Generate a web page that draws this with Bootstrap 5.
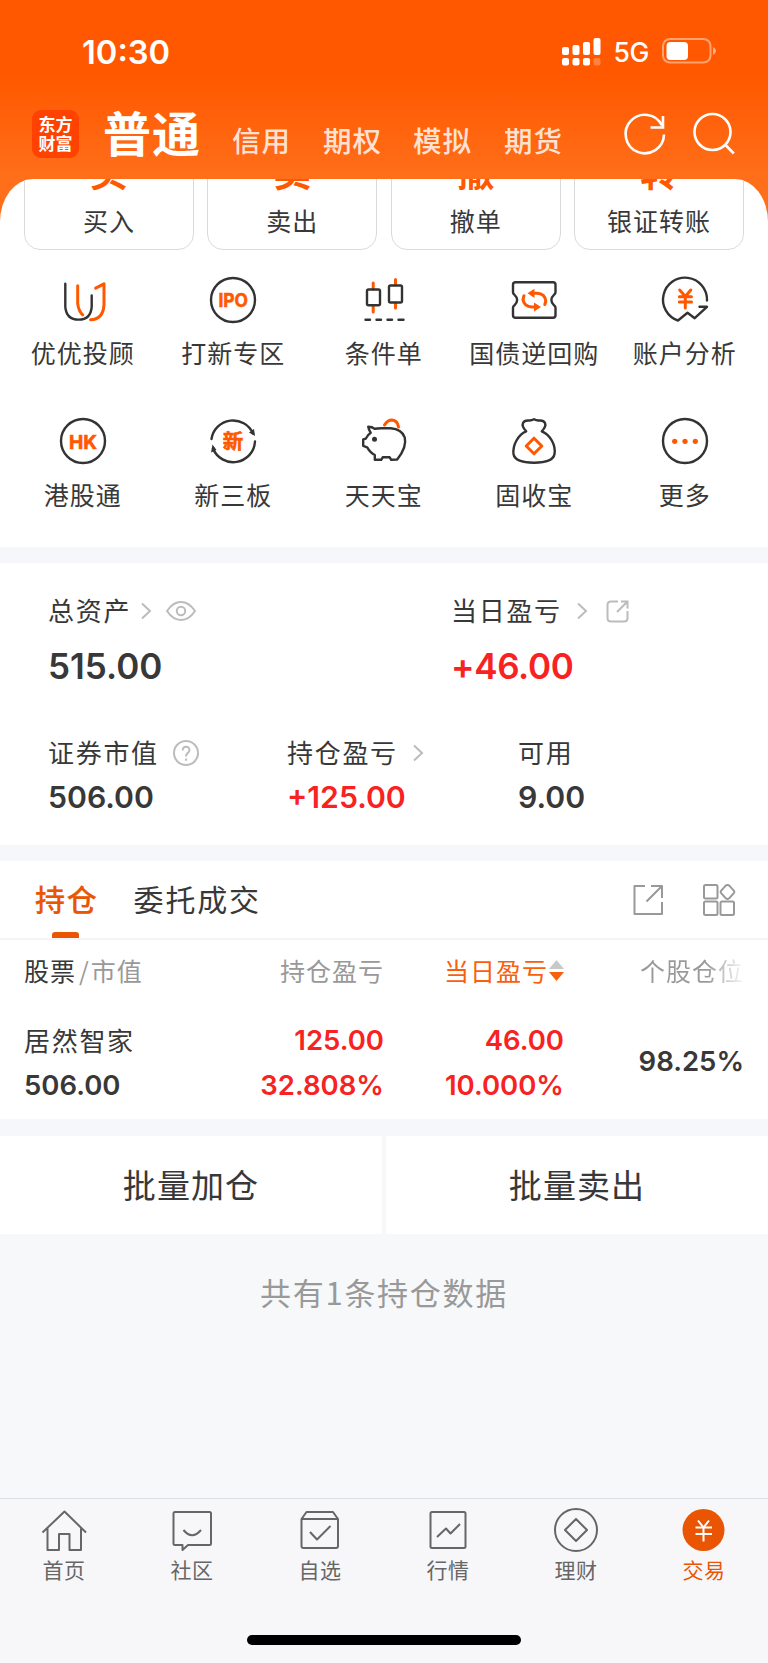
<!DOCTYPE html>
<html lang="zh-CN">
<head>
<meta charset="utf-8">
<meta name="viewport" content="width=device-width, initial-scale=1">
<title>交易</title>
<link href="https://cdn.jsdelivr.net/npm/bootstrap@5.3.0/dist/css/bootstrap.min.css" rel="stylesheet">
<style>
  body { font-family: "Noto Sans CJK SC", sans-serif; font-weight: 400; color: #383838; background: #f6f8fa; width: 768px; height: 1663px; overflow: hidden; line-height: 1; letter-spacing: 1px; }
  svg { display: block; flex: none; fill: none; overflow: visible; }
  .num { font-family: Inter, sans-serif; font-weight: 600; letter-spacing: 0; white-space: nowrap; }
  .app { height: 1663px; }
  .top-area { height: 235px; background: linear-gradient(#ff5800 0, #ff5800 75px, #ff6f1a 179px); }
  .status-bar { height: 104px; padding: 0 51px 0 82px; }
  .clock { font-size: 32.7px; padding-top: 1px; }
  .net { font-size: 26.5px; font-weight: 500; letter-spacing: -.3px; }
  .top-nav { height: 75px; padding: 0 33px 0 32px; color: #fff; }
  .brand-tile { width: 47px; height: 48px; margin-top: 6px; border-radius: 9px; background: #ff4200; font-size: 17px; font-weight: 700; letter-spacing: 0; line-height: 19.5px; padding-bottom: 2px; }
  .cur { font-size: 48px; font-weight: 700; margin-left: 24px; margin-top: 2px; line-height: 50px; }
  .alt { font-size: 28.5px; font-weight: 500; color: rgba(255,255,255,.82); letter-spacing: 1px; margin-top: 21px; line-height: 30px; }
  .sheet { height: 368px; margin-top: -56px; border-radius: 33px 33px 0 0 / 43px 43px 0 0; overflow: hidden; }
  .deal { width: 170px; height: 100px; margin-top: -29px; border: 1.5px solid #dadada; border-radius: 16px; font-size: 25px; line-height: 26px; }
  .deal b { font-size: 38px; font-weight: 700; line-height: 38px; color: #ff5800; margin-bottom: 18px; letter-spacing: 0; }
  .tool { width: 150.5px; height: 141.5px; font-size: 25px; }
  .tool span { margin-top: 15.500px; line-height: 26px; white-space: nowrap; }
  .ink { stroke: #333; stroke-width: 2.4; stroke-linecap: round; stroke-linejoin: round; }
  .hot { stroke: #ff5800; stroke-width: 3; stroke-linecap: round; stroke-linejoin: round; }
  .glyph { fill: #ff5800; stroke: #ff5800; stroke-width: .6; font-weight: 700; letter-spacing: 0; }
  .strip { height: 16px; background: #f5f7fa; }
  .assets { height: 282px; padding: 34px 0 0 48px; font-size: 26px; letter-spacing: 1.7px; }
  .cap { height: 28px; line-height: 26px; }
  .cap span { position: relative; margin-top: -2px; }
  .big { font-size: 35px; line-height: 40px; margin-top: 21px; }
  .mid { font-size: 30.2px; line-height: 34px; margin-top: 13px; }
  .rise { color: #f82222; }
  .pale { stroke: #bcbcbc; stroke-width: 2; }
  .tabs-row { height: 79px; padding: 0 33px 0 35px; border-bottom: 2px solid #f4f4f6; font-size: 30px; letter-spacing: 1.8px; }
  .tabs-row > div > span { margin-top: -4px; }
  .tab-on { color: #ea5504; font-weight: 500; -webkit-text-stroke: .2px #ea5504; }
  .tab-on::after { content: ""; position: absolute; left: 17px; bottom: 0; width: 27px; height: 6px; border-radius: 3px 3px 0 0; background: #ea5504; }
  .grey { color: #999; }
  .line-icon { stroke: #999; stroke-width: 2; stroke-linejoin: round; }
  .holdings { height: 179px; padding: 17px 24px 0 24px; }
  .c1 { width: 120px; } .c2 { width: 240px; } .c3 { width: 180px; } .c4 { width: 180px; }
  .th-row { font-size: 25px; height: 26px; line-height: 26px; }
  .fade-text { background: linear-gradient(90deg, #999 64%, #f4f4f4 98%); -webkit-background-clip: text; background-clip: text; color: transparent; }
  .td-row { margin-top: 35px; height: 90px; }
  .td-row .num { font-size: 27.5px; line-height: 45px; }
  .stock-name { font-size: 26px; letter-spacing: 1.7px; line-height: 43px; margin-bottom: 2px; }
  .batch { height: 98px; gap: 4px; font-size: 33px; letter-spacing: 1.1px; padding-bottom: 0; }
  .batch > div { padding-bottom: 1px; }
  .total { font-size: 31px; letter-spacing: 1.7px; padding-top: 42px; line-height: 32px; height: 264px; color: #999; }
  .tabbar { height: 164px; border-top: 1.5px solid #dcdde0; background: #f7f7fa; color: #666; font-size: 21px; letter-spacing: .6px; padding-top: 7px; }
  .tabbar span { margin-top: 3px; line-height: 24px; }
  .tabbar .ic { stroke: #666; stroke-width: 2; stroke-linejoin: round; }
  .home-bar { width: 274px; height: 10px; background: #000; bottom: 17px; }
</style>
<script src="https://cdn.jsdelivr.net/npm/bootstrap@5.3.0/dist/js/bootstrap.bundle.min.js"></script>
</head>
<body>
<div class="app d-flex flex-column">
  <header class="top-area flex-shrink-0">
    <div class="status-bar d-flex align-items-center text-white">
      <span class="num clock me-auto">10:30</span>
      <svg width="40" height="28" fill="none"><g fill="#fff"><rect x="0" y="9" width="7" height="8" rx="2"/><rect x="10.5" y="7" width="7" height="10" rx="2"/><rect x="21" y="4" width="7" height="13" rx="2"/><rect x="31.500" y="0" width="7" height="17" rx="2"/><rect x="0" y="20" width="7" height="7.500" rx="2"/><rect x="10.500" y="20" width="7" height="7.500" rx="2"/><rect x="21" y="20" width="7" height="7.500" rx="2"/><rect x="31.500" y="20" width="7" height="7.500" rx="2" opacity=".25"/></g></svg>
      <span class="num net" style="margin-left:11px">5G</span>
      <svg class="ms-2" width="60" height="26"><rect x="6" y="0" width="47.500" height="23.500" rx="7" stroke="#fff" stroke-opacity=".45" stroke-width="2"/><rect x="9.500" y="3" width="21.500" height="18" rx="4" fill="#fff"/><path d="M56 8v8q3-1.500 3-4t-3-4z" fill="#fff" fill-opacity=".5"/></svg>
    </div>
    <nav class="top-nav d-flex align-items-start">
      <div class="brand-tile d-flex flex-column align-items-center justify-content-center"><span>东方</span><span>财富</span></div>
      <span class="cur">普通</span>
      <span class="alt" style="margin-left:31px">信用</span>
      <span class="alt" style="margin-left:32px">期权</span>
      <span class="alt" style="margin-left:31px">模拟</span>
      <span class="alt" style="margin-left:32px">期货</span>
      <svg class="ms-auto" width="42" height="42" style="margin-top:9px" stroke="#fff" stroke-width="2.600"><path d="M40 21.500A19.200 19.200 0 1 1 38 12.500M39 3v11.500H26.500"/></svg>
      <svg width="42" height="42" style="margin-left:27px;margin-top:9px" stroke="#fff" stroke-width="2.600"><circle cx="19.500" cy="19" r="18"/><path d="M32 31.500l8.800 9"/></svg>
    </nav>
  </header>

  <main class="sheet bg-white flex-shrink-0">
    <div class="d-flex justify-content-between" style="padding:0 24px">
      <div class="deal d-flex flex-column align-items-center"><b>买</b>买入</div>
      <div class="deal d-flex flex-column align-items-center"><b>卖</b>卖出</div>
      <div class="deal d-flex flex-column align-items-center"><b>撤</b>撤单</div>
      <div class="deal d-flex flex-column align-items-center"><b>转</b>银证转账</div>
    </div>
    <div class="d-flex flex-wrap" style="padding:25.5px 0 0 7.5px">
      <div class="tool d-flex flex-column align-items-center"><svg width="48" height="48"><path class="ink" d="M6.300 7.800v23q1 12.700 13.400 12.800 12-.100 13-12.800V19.500"/><path class="hot" d="M18.700 9.800v17.500q.800 7.700 5 11.500M36.700 12.200L45 7.800v21q-1 14.500-13.500 15"/></svg><span>优优投顾</span></div>
      <div class="tool d-flex flex-column align-items-center"><svg width="48" height="48"><circle class="ink" cx="24" cy="24" r="22"/><text class="glyph" x="9.500" y="31" font-family="Inter, sans-serif" font-size="19" textLength="29.500" lengthAdjust="spacingAndGlyphs">IPO</text></svg><span>打新专区</span></div>
      <div class="tool d-flex flex-column align-items-center"><svg width="48" height="48"><path class="hot" d="M13.200 7v6M13.200 30v6M35.500 3.500v5M35.500 27v5"/><g class="ink"><rect x="7" y="13.500" width="13" height="15.700" rx="1.500"/><rect x="29" y="9.500" width="13" height="17" rx="1.500"/><path d="M5.500 43.800h4.500M16.500 43.800h4.500M27.500 43.800h4.500M38.500 43.800h5"/></g></svg><span>条件单</span></div>
      <div class="tool d-flex flex-column align-items-center"><svg width="48" height="48"><path class="ink" d="M5.500 6.300h37.500q2.500 0 2.500 2.500v7.500q0 1.500-1.500 2.500c-3.500 3-3.500 7.500 0 10.500q1.500 1 1.500 2.500v7.500q0 2.500-2.500 2.500H5.500q-2.500 0-2.500-2.500v-7.500q0-1.500 1.500-2.500c3.500-3 3.500-7.500 0-10.500q-1.500-1-1.500-2.500V8.800q0-2.500 2.500-2.500z"/><path class="hot" d="M22 17.300h5q8 .500 8.800 7.700l-1 3.500M26.500 31h-4.500q-8-.500-9-7.500l1-3.800"/><path d="M24.500 12.700v9.200l-7-4.600zM24 26.400v9.200l7-4.600z" fill="#ff5800"/></svg><span>国债逆回购</span></div>
      <div class="tool d-flex flex-column align-items-center"><svg width="48" height="48"><path class="ink" d="M46 24.500A22 22 0 1 0 17 44.500L26.500 36.800l7.200 5.400L46 30.800h-7.500"/><path class="hot" d="M18.700 14l5.600 6.500L29.800 14M24.300 21v11M18.300 20.700h12.200M18.300 26h12.200"/></svg><span>账户分析</span></div>

      <div class="tool d-flex flex-column align-items-center"><svg width="48" height="48"><circle class="ink" cx="24" cy="24" r="22"/><text class="glyph" x="10" y="31.500" font-family="Inter, sans-serif" font-size="19" textLength="28" lengthAdjust="spacingAndGlyphs">HK</text></svg><span>港股通</span></div>
      <div class="tool d-flex flex-column align-items-center"><svg width="48" height="48"><path class="ink" d="M2.500 22A21.800 21.800 0 0 1 44 16.500M46 24.500A21.800 21.800 0 0 1 4 31.500"/><path d="M40 15.500l5-3.500 1 7zM2 35.500l1.500-8 4 5.500z" fill="#333"/><text class="glyph" x="24" y="31.500" text-anchor="middle" font-size="20.500">新</text></svg><span>新三板</span></div>
      <div class="tool d-flex flex-column align-items-center"><svg width="48" height="48"><path class="ink" d="M8.200 9.700q4 0 6.500 2.100 4-.800 9-.500h7q11 1 14 9 2.500 9.700-7.500 22.200l-6 .300-1.500-2.500h-7l-1.500 2.500h-6.400V38q-4.300-2-7.600-7.700l-4-1.500V22.500l2.500-.800q2-4 5-6-2-2.500-2.500-6z"/><circle cx="14.500" cy="22.300" r="2.500" fill="#333"/><path class="hot" d="M24.500 8q3-5 7.500-5 5.500.500 6.500 7"/></svg><span>天天宝</span></div>
      <div class="tool d-flex flex-column align-items-center"><svg width="48" height="48"><path class="ink" d="M16.200 14.300q-4.700-5-3.200-8.300 1.500-3 6-2.500 2.500.200 5-1.300 2.500 1.500 5 1.300 4.500-.500 6 2.500 1.500 3.300-3.200 8.300C40 17.500 46 28 44.500 37c-1 6-9 8.700-20.500 8.700S4.500 43 3.500 37c-1-9 4.700-19.500 12.700-22.700z"/><path class="hot" d="M24 21.200l7.800 7.800-7.800 7.800-7.800-7.800z"/></svg><span>固收宝</span></div>
      <div class="tool d-flex flex-column align-items-center"><svg width="48" height="48"><circle class="ink" cx="24" cy="24" r="22"/><g fill="#ff5800"><circle cx="13.700" cy="24.300" r="2.600"/><circle cx="24" cy="24.300" r="2.600"/><circle cx="34.300" cy="24.300" r="2.600"/></g></svg><span>更多</span></div>
    </div>
  </main>

  <div class="strip flex-shrink-0"></div>

  <section class="assets bg-white flex-shrink-0">
    <div class="d-flex">
      <div style="width:403px">
        <div class="cap d-flex align-items-center"><span>总资产</span><svg class="pale" width="10" height="16" style="margin-left:10px"><path d="M1 .500l8 7.500-8 7.500"/></svg><svg class="pale" width="30" height="20" style="margin-left:15px"><path d="M1 10Q7 1 15 1t14 9q-6 9-14 9T1 10z"/><circle cx="15" cy="10" r="4.200"/></svg></div>
        <div class="num big">515.00</div>
      </div>
      <div>
        <div class="cap d-flex align-items-center"><span>当日盈亏</span><svg class="pale" width="10" height="16" style="margin-left:15px"><path d="M1 .500l8 7.500-8 7.500"/></svg><svg class="pale" width="23" height="23" style="margin-left:19px"><path d="M12 1.500H5Q1.500 1.500 1.500 5v13q0 3.500 3.500 3.500h13q3.500 0 3.500-3.500v-7M15 1.500h6.500v7M21.500 1.500L11 12"/></svg></div>
        <div class="num big rise" style="letter-spacing:-.35px">+46.00</div>
      </div>
    </div>
    <div class="d-flex" style="margin-top:53px">
      <div style="width:239px">
        <div class="cap d-flex align-items-center"><span>证券市值</span><svg class="pale" width="26" height="26" style="margin-left:14px"><circle cx="13" cy="13" r="12"/><path d="M9.700 10.500q0-3.700 3.400-3.700t3.300 3.400q0 1.800-2 3.200-1.300 1-1.300 3M13.100 18.500v2.200"/></svg></div>
        <div class="num mid">506.00</div>
      </div>
      <div style="width:231px">
        <div class="cap d-flex align-items-center"><span>持仓盈亏</span><svg class="pale" width="10" height="16" style="margin-left:15px"><path d="M1 .500l8 7.500-8 7.500"/></svg></div>
        <div class="num mid rise">+125.00</div>
      </div>
      <div>
        <div class="cap d-flex align-items-center"><span>可用</span></div>
        <div class="num mid">9.00</div>
      </div>
    </div>
  </section>

  <div class="strip flex-shrink-0"></div>

  <section class="bg-white flex-shrink-0">
    <div class="tabs-row d-flex align-items-center">
      <div class="tab-on position-relative h-100 d-flex align-items-center"><span>持仓</span></div>
      <div class="h-100 d-flex align-items-center" style="margin-left:35px"><span>委托成交</span></div>
      <svg class="line-icon ms-auto" width="30" height="30"><path d="M12 1H1.500v28H29V17M18 1h11v12M29 1L13.500 16.500"/></svg>
      <svg class="line-icon" width="32" height="32" style="margin-left:40px"><rect x="1" y="1" width="13.500" height="13.500" rx="1.500"/><rect x="1" y="17.500" width="13.500" height="13.500" rx="1.500"/><rect x="17.500" y="17.500" width="13.500" height="13.500" rx="1.500"/><path d="M24.500 1q1.200 0 2 .800l4.500 5q.800 1 0 2l-4.800 5.500q-1.700 1.500-3.400 0l-4.800-5.500q-.800-1 0-2l4.500-5q.800-.800 2-.800z"/></svg>
    </div>
    <div class="holdings">
      <div class="th-row d-flex">
        <div class="c1 text-nowrap">股票<span class="grey"><span style="margin:0 1px 0 3px">/</span>市值</span></div>
        <div class="c2 text-end grey">持仓盈亏</div>
        <div class="c3 d-flex justify-content-end align-items-center" style="color:#f8600c">当日盈亏<svg width="15" height="21" style="margin-left:1px;margin-top:1px"><path d="M7.500 0L15 9H0z" fill="#c8c8c8"/><path d="M0 12h15l-7.500 9z" fill="#f8600c"/></svg></div>
        <div class="c4 text-end"><span class="fade-text">个股仓位</span></div>
      </div>
      <div class="td-row d-flex">
        <div class="c1 text-nowrap"><div class="stock-name">居然智家</div><div class="num">506.00</div></div>
        <div class="c2 text-end rise"><div class="num">125.00</div><div class="num">32.808%</div></div>
        <div class="c3 text-end rise"><div class="num">46.00</div><div class="num">10.000%</div></div>
        <div class="c4 d-flex align-items-center justify-content-end pb-1"><span class="num">98.25%</span></div>
      </div>
    </div>
  </section>

  <div class="strip flex-shrink-0" style="height:17px"></div>

  <div class="batch d-flex flex-shrink-0">
    <div class="bg-white flex-fill w-50 d-flex align-items-center justify-content-center">批量加仓</div>
    <div class="bg-white flex-fill w-50 d-flex align-items-center justify-content-center">批量卖出</div>
  </div>
  <div class="total text-center flex-shrink-0">共有1条持仓数据</div>

  <footer class="tabbar position-relative d-flex flex-shrink-0">
    <div class="flex-fill d-flex flex-column align-items-center"><svg class="ic" width="48" height="48"><path d="M2.500 26.500L24.500 5.500l21.500 21M7.500 22.500v21.500h11.500V28h10.500v16h11.500V22.500"/></svg><span>首页</span></div>
    <div class="flex-fill d-flex flex-column align-items-center"><svg class="ic" width="48" height="48"><path d="M7 6h34.500q1.500 0 1.500 1.500v30q0 1.500-1.500 1.500H20l-5.500 5V39H7q-1.500 0-1.500-1.500v-30Q5.500 6 7 6zM15.500 24q8.500 10.500 17.500 0"/></svg><span>社区</span></div>
    <div class="flex-fill d-flex flex-column align-items-center"><svg class="ic" width="48" height="48"><path d="M5.500 13L10.500 6h26.500l5 7v27q0 2-2 2H7.500q-2 0-2-2zM5.500 13h36.500M14 26l7 7.500L34.500 20"/></svg><span>自选</span></div>
    <div class="flex-fill d-flex flex-column align-items-center"><svg class="ic" width="48" height="48"><rect x="6.500" y="6" width="35" height="36" rx="1.500"/><path d="M13 31l9-8.500 4.500 5 9.500-9.500"/></svg><span>行情</span></div>
    <div class="flex-fill d-flex flex-column align-items-center"><svg class="ic" width="48" height="48"><circle cx="24" cy="24" r="21"/><path d="M24 13L35 24 24 35 13 24z"/></svg><span>理财</span></div>
    <div class="flex-fill d-flex flex-column align-items-center" style="color:#ea5504"><svg width="48" height="48"><circle cx="23.500" cy="24" r="21" fill="#ea5504"/><path d="M18 14.500l5.500 7 5.500-7M23.500 21.500v14M15.500 21.500h16.500M15.500 28h16.500" stroke="#fff" stroke-width="2"/></svg><span>交易</span></div>
    <div class="home-bar position-absolute start-50 translate-middle-x rounded-pill"></div>
  </footer>
</div>
</body>
</html>
